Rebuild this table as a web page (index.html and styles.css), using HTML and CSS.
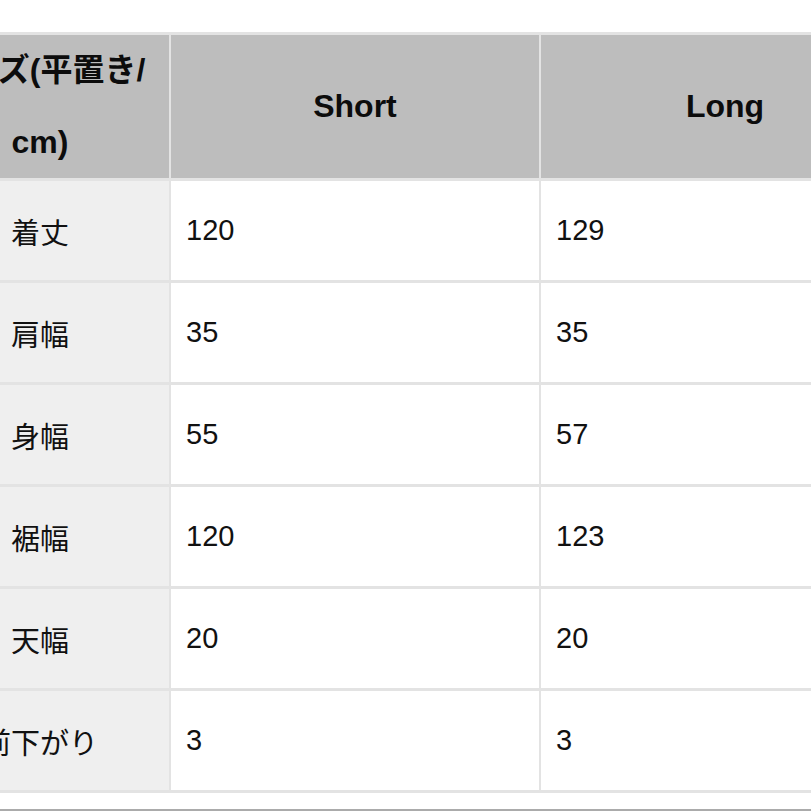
FILE: index.html
```html
<!DOCTYPE html>
<html lang="ja">
<head>
<meta charset="utf-8">
<title>サイズ表</title>
<link rel="stylesheet" href="styles.css">
</head>
<body>
<div class="page">
  <table class="size-table">
    <colgroup>
      <col class="col-label">
      <col class="col-value">
      <col class="col-value">
    </colgroup>
    <thead>
      <tr>
        <th class="head-label">サイズ(平置き/<br>cm)</th>
        <th>Short</th>
        <th>Long</th>
      </tr>
    </thead>
    <tbody>
      <tr><td class="label">着丈</td><td>120</td><td>129</td></tr>
      <tr><td class="label">肩幅</td><td>35</td><td>35</td></tr>
      <tr><td class="label">身幅</td><td>55</td><td>57</td></tr>
      <tr><td class="label">裾幅</td><td>120</td><td>123</td></tr>
      <tr><td class="label">天幅</td><td>20</td><td>20</td></tr>
      <tr><td class="label">前下がり</td><td>3</td><td>3</td></tr>
    </tbody>
  </table>
  <div class="rule"></div>
</div>
</body>
</html>
```

FILE: styles.css
```css
html, body {
  margin: 0;
  padding: 0;
  background: #ffffff;
}

body {
  font-family: "Liberation Sans", "Noto Sans CJK JP", sans-serif;
  color: #111111;
  overflow: hidden;
}

.page {
  padding-top: 32px;
  width: 811px;
  height: 811px;
  overflow: hidden;
}

.size-table {
  margin-left: -91px;
  border-collapse: separate;
  border-spacing: 2px 3px;
  background: #e3e3e3;
  table-layout: fixed;
  width: 1002px;
}

.col-label { width: 258px; }
.col-value { width: 368px; }

.size-table th {
  background: #bdbdbd;
  font-size: 32px;
  font-weight: bold;
  line-height: 71.5px;
  height: 143px;
  padding: 0;
  text-align: center;
  vertical-align: middle;
  color: #0c0c0c;
}

.size-table th.head-label {
  padding: 0;
  white-space: nowrap;
}

.size-table td {
  background: #ffffff;
  font-size: 29px;
  height: 99px;
  padding: 0 15px;
  vertical-align: middle;
  text-align: left;
}

.size-table td.label {
  background: #efefef;
  text-align: center;
  padding: 0;
}

.rule {
  margin-top: 16px;
  height: 2px;
  background: #ababab;
}
```
